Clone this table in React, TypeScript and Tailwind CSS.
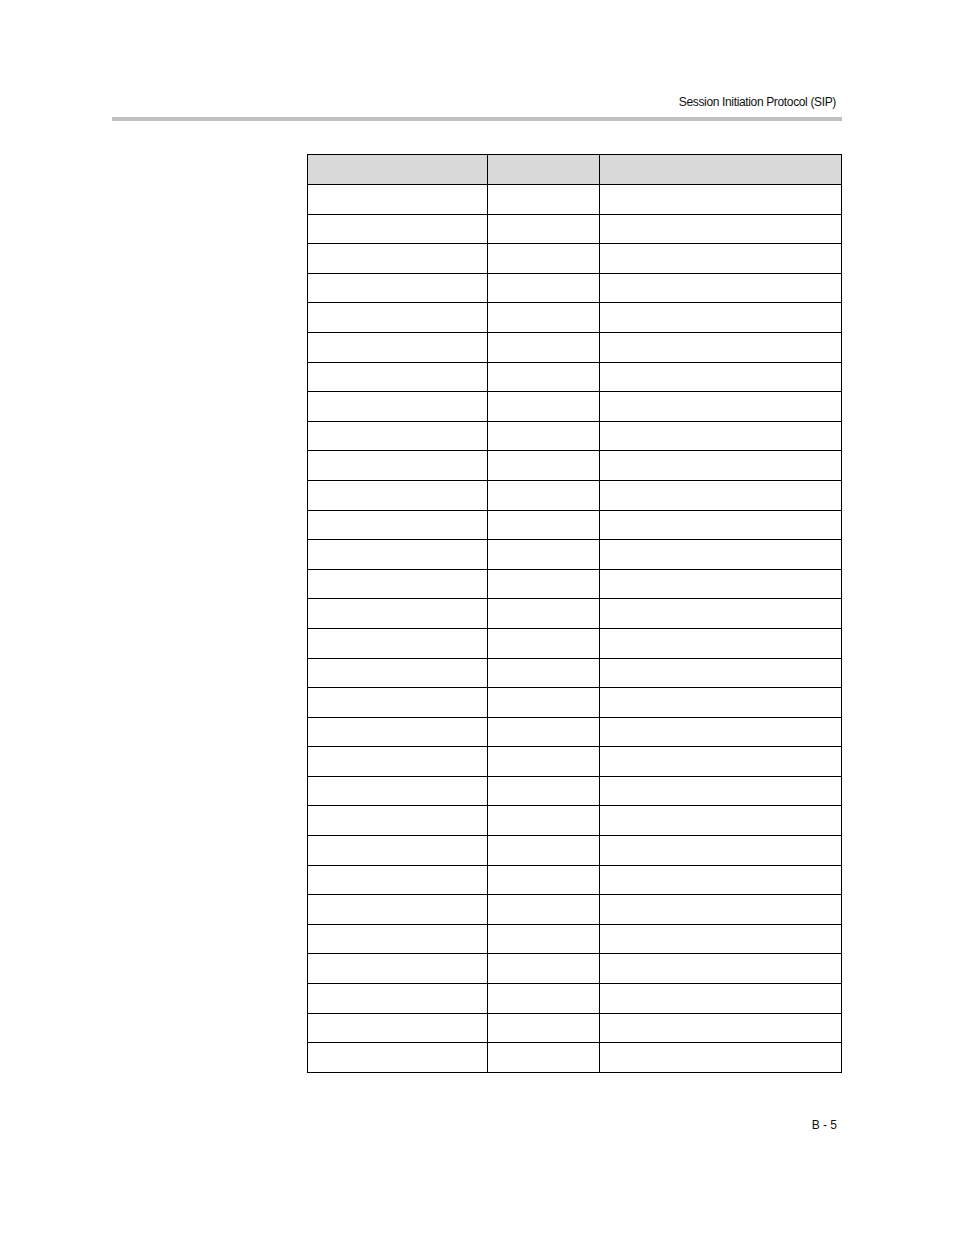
import React from "react";

export default function App() {
  const rows = Array.from({ length: 30 }, (_, i) => i);
  return (
    <div
      className="w-[954px] h-[1235px] bg-white flex flex-col text-[#111]"
      style={{ fontFamily: '"Liberation Sans", Arial, sans-serif' }}
    >
      <div className="pt-[95px] pr-[118px] flex justify-end text-[12px] leading-[14px] tracking-[-0.35px]">
        Session Initiation Protocol (SIP)
      </div>
      <div className="mt-[8px] ml-[112px] w-[730px] h-[4px] bg-[#c0c0c0]" />
      <div className="mt-[33px] ml-[307px] w-[535px] border border-black">
        <div className="grid grid-cols-[179px_112px_242px] h-[29px] bg-[#d9d9d9]">
          <div />
          <div className="border-l border-black" />
          <div className="border-l border-black" />
        </div>
        {rows.map((r) => (
          <div
            key={r}
            className="grid grid-cols-[179px_112px_242px] h-[29.6px] border-t border-black"
          >
            <div />
            <div className="border-l border-black" />
            <div className="border-l border-black" />
          </div>
        ))}
      </div>
      <div className="mt-[45px] pr-[117px] flex justify-end text-[12px] leading-[14px]">
        B - 5
      </div>
    </div>
  );
}
